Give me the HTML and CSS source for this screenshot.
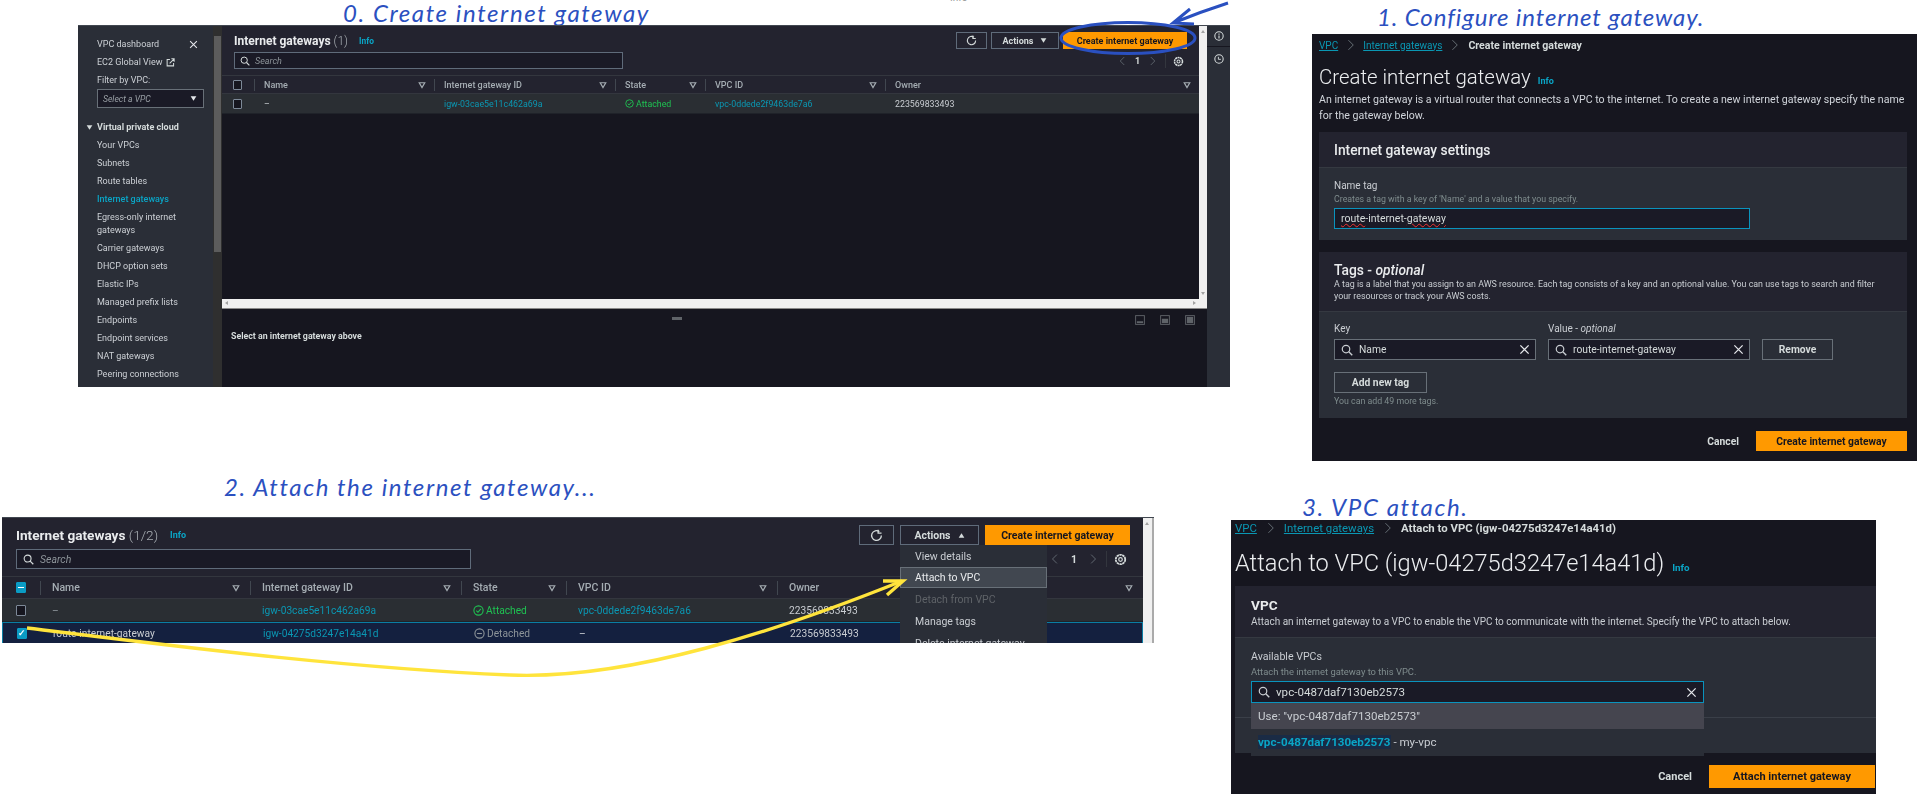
FILE: index.html
```html
<!DOCTYPE html>
<html lang="en">
<head>
    <meta charset="UTF-8" />
    <title>Internet gateway walkthrough</title>
    <link rel="stylesheet" href="styles.css">
</head>
<body>
    <svg class="defs" aria-hidden="true">
        <symbol id="i-search" viewBox="0 0 16 16"><circle cx="6.7" cy="6.7" r="5" fill="none" stroke="currentColor" stroke-width="1.6"/><path d="M10.4 10.4L15 15" stroke="currentColor" stroke-width="1.8" fill="none"/></symbol>
        <symbol id="i-close" viewBox="0 0 16 16"><path d="M2 2L14 14M14 2L2 14" stroke="currentColor" stroke-width="1.9" fill="none"/></symbol>
        <symbol id="i-filter" viewBox="0 0 16 16"><path d="M2.5 3.5H13.5L8 13Z" fill="none" stroke="currentColor" stroke-width="2.4"/></symbol>
        <symbol id="i-down" viewBox="0 0 16 16"><path d="M1.5 3H14.5L8 13Z" fill="currentColor"/></symbol>
        <symbol id="i-up" viewBox="0 0 16 16"><path d="M1.5 13H14.5L8 3Z" fill="currentColor"/></symbol>
        <symbol id="i-refresh" viewBox="0 0 16 16"><path d="M11.5 3.2A6 6 0 1 0 14 8" fill="none" stroke="currentColor" stroke-width="1.6"/><path d="M10 .8V5H14.2" fill="none" stroke="currentColor" stroke-width="1.6"/></symbol>
        <symbol id="i-gear" viewBox="0 0 16 16"><circle cx="8" cy="8" r="5.8" fill="none" stroke="currentColor" stroke-width="2.2" stroke-dasharray="3 .6"/><circle cx="8" cy="8" r="2.2" fill="none" stroke="currentColor" stroke-width="1.5"/></symbol>
        <symbol id="i-left" viewBox="0 0 16 16"><path d="M11 1L4 8L11 15" fill="none" stroke="currentColor" stroke-width="1.4"/></symbol>
        <symbol id="i-right" viewBox="0 0 16 16"><path d="M5 1L12 8L5 15" fill="none" stroke="currentColor" stroke-width="1.4"/></symbol>
        <symbol id="i-ok" viewBox="0 0 16 16"><circle cx="8" cy="8" r="6.7" fill="none" stroke="currentColor" stroke-width="1.6"/><path d="M4.8 8.2L7.2 10.6L11.4 5.6" fill="none" stroke="currentColor" stroke-width="1.6"/></symbol>
        <symbol id="i-minus" viewBox="0 0 16 16"><circle cx="8" cy="8" r="6.7" fill="none" stroke="currentColor" stroke-width="1.6"/><path d="M4.5 8H11.5" stroke="currentColor" stroke-width="1.6"/></symbol>
        <symbol id="i-ext" viewBox="0 0 16 16"><path d="M7 2.5H2V14H13.5V9" fill="none" stroke="currentColor" stroke-width="1.8"/><path d="M6.5 9.5L14 2M9.5 1.5H14.5V6.5" fill="none" stroke="currentColor" stroke-width="1.8"/></symbol>
        <symbol id="i-info" viewBox="0 0 16 16"><circle cx="8" cy="8" r="6.7" fill="none" stroke="currentColor" stroke-width="1.7"/><path d="M8 7V12M8 4V5.8" stroke="currentColor" stroke-width="1.8"/></symbol>
        <symbol id="i-clock" viewBox="0 0 16 16"><circle cx="8" cy="8" r="6.7" fill="none" stroke="currentColor" stroke-width="1.7"/><path d="M7 4.5V8.5H11" fill="none" stroke="currentColor" stroke-width="1.5"/></symbol>
        <symbol id="i-dock-low" viewBox="0 0 16 16"><rect x="1" y="1" width="14" height="14" fill="none" stroke="currentColor" stroke-width="1.5"/><rect x="3" y="10" width="10" height="3" fill="currentColor"/></symbol>
        <symbol id="i-dock-mid" viewBox="0 0 16 16"><rect x="1" y="1" width="14" height="14" fill="none" stroke="currentColor" stroke-width="1.5"/><rect x="3" y="6" width="10" height="7" fill="currentColor"/></symbol>
        <symbol id="i-dock-full" viewBox="0 0 16 16"><rect x="1" y="1" width="14" height="14" fill="none" stroke="currentColor" stroke-width="1.5"/><rect x="3" y="3" width="10" height="10" fill="currentColor"/></symbol>
    </svg>

    <p class="stray">Info</p>

    <p class="note note-0">0. Create internet gateway</p>
    <p class="note note-1">1. Configure internet gateway.</p>
    <p class="note note-2">2. Attach the internet gateway...</p>
    <p class="note note-3">3. VPC attach.</p>

    <!-- step 0: list page with nav -->
    <section class="shot shot-a">
        <nav class="sidenav">
            <div class="nav-links">
                <div class="nav-top"><a>VPC dashboard</a><svg class="nav-x"><use href="#i-close"/></svg></div>
                <a>EC2 Global View <svg class="ico-ext"><use href="#i-ext"/></svg></a>
                <a>Filter by VPC:</a>
                <div class="vpc-select"><i>Select a VPC</i><svg class="caret"><use href="#i-down"/></svg></div>
                <div class="nav-group"><svg class="group-caret"><use href="#i-down"/></svg>Virtual private cloud</div>
                <a>Your VPCs</a>
                <a>Subnets</a>
                <a>Route tables</a>
                <a class="on">Internet gateways</a>
                <a class="wrap">Egress-only internet gateways</a>
                <a>Carrier gateways</a>
                <a>DHCP option sets</a>
                <a>Elastic IPs</a>
                <a>Managed prefix lists</a>
                <a>Endpoints</a>
                <a>Endpoint services</a>
                <a>NAT gateways</a>
                <a>Peering connections</a>
            </div>
            <div class="nav-scroll"><span class="nav-thumb"></span></div>
        </nav>
        <div class="main">
            <div class="upper">
                <div class="upper-inner">
                    <div class="view">
                        <header class="head">
                            <div class="head-left">
                                <h2>Internet gateways <span>(1)</span><b class="info">Info</b></h2>
                                <div class="search"><svg><use href="#i-search"/></svg><i>Search</i></div>
                            </div>
                            <div class="head-right">
                                <div class="actions">
                                    <button class="btn btn-icon"><svg><use href="#i-refresh"/></svg></button>
                                    <button class="btn btn-actions">Actions <svg><use href="#i-down"/></svg></button>
                                    <button class="btn btn-primary">Create internet gateway</button>
                                </div>
                                <div class="pager">
                                    <svg class="pg"><use href="#i-left"/></svg><b>1</b><svg class="pg"><use href="#i-right"/></svg><span class="pg-sep"></span><svg class="gear"><use href="#i-gear"/></svg>
                                </div>
                            </div>
                        </header>
                        <div class="tbl">
                            <div class="tr th">
                                <div class="cell-check"><span class="check"></span></div>
                                <div class="col">Name<svg><use href="#i-filter"/></svg></div>
                                <div class="col">Internet gateway ID<svg><use href="#i-filter"/></svg></div>
                                <div class="col">State<svg><use href="#i-filter"/></svg></div>
                                <div class="col">VPC ID<svg><use href="#i-filter"/></svg></div>
                                <div class="col">Owner<svg><use href="#i-filter"/></svg></div>
                            </div>
                            <div class="tr row">
                                <div class="cell-check"><span class="check"></span></div>
                                <div class="td">–</div>
                                <div class="td link">igw-03cae5e11c462a69a</div>
                                <div class="td good"><svg><use href="#i-ok"/></svg>Attached</div>
                                <div class="td link">vpc-0ddede2f9463de7a6</div>
                                <div class="td">223569833493</div>
                            </div>
                        </div>
                    </div>
                    <div class="vscroll"></div>
                </div>
                <div class="hscroll"></div>
            </div>
            <div class="lower">
                <span class="grip"></span>
                <p>Select an internet gateway above</p>
                <div class="dock">
                    <svg><use href="#i-dock-low"/></svg>
                    <svg><use href="#i-dock-mid"/></svg>
                    <svg><use href="#i-dock-full"/></svg>
                </div>
            </div>
        </div>
        <aside class="rail">
            <svg><use href="#i-info"/></svg>
            <span></span>
            <svg><use href="#i-clock"/></svg>
        </aside>
    </section>

    <!-- step 1: create form -->
    <section class="shot shot-b">
        <div class="crumbs"><a>VPC</a><svg><use href="#i-right"/></svg><a>Internet gateways</a><svg><use href="#i-right"/></svg><b>Create internet gateway</b></div>
        <h1>Create internet gateway<b class="info">Info</b></h1>
        <p class="lede">An internet gateway is a virtual router that connects a VPC to the internet. To create a new internet gateway specify the name for the gateway below.</p>
        <div class="card card-settings">
            <div class="card-head"><h3>Internet gateway settings</h3></div>
            <div class="card-body">
                <label>Name tag</label>
                <small>Creates a tag with a key of 'Name' and a value that you specify.</small>
                <div class="input input-focus"><u>route</u>-internet-<u>gateway</u></div>
            </div>
        </div>
        <div class="card card-tags">
            <div class="card-head">
                <h3>Tags - <i>optional</i></h3>
                <p>A tag is a label that you assign to an AWS resource. Each tag consists of a key and an optional value. You can use tags to search and filter your resources or track your AWS costs.</p>
            </div>
            <div class="card-body">
                <div class="tag-grid">
                    <label>Key</label>
                    <label>Value - <i>optional</i></label>
                    <span></span>
                    <div class="input input-search"><svg><use href="#i-search"/></svg><span>Name</span><svg class="x"><use href="#i-close"/></svg></div>
                    <div class="input input-search"><svg><use href="#i-search"/></svg><span>route-internet-gateway</span><svg class="x"><use href="#i-close"/></svg></div>
                    <button class="btn btn-form">Remove</button>
                </div>
                <button class="btn btn-form btn-add">Add new tag</button>
                <small>You can add 49 more tags.</small>
            </div>
        </div>
        <div class="foot"><b>Cancel</b><button class="btn btn-primary">Create internet gateway</button></div>
    </section>

    <!-- step 2: list page, actions menu open -->
    <section class="shot shot-c">
        <div class="view">
            <header class="head">
                <div class="head-left">
                    <h2>Internet gateways <span>(1/2)</span><b class="info">Info</b></h2>
                    <div class="search"><svg><use href="#i-search"/></svg><i>Search</i></div>
                </div>
                <div class="head-right">
                    <div class="actions">
                        <button class="btn btn-icon"><svg><use href="#i-refresh"/></svg></button>
                        <button class="btn btn-actions">Actions <svg><use href="#i-up"/></svg></button>
                        <button class="btn btn-primary">Create internet gateway</button>
                    </div>
                    <div class="pager">
                        <svg class="pg"><use href="#i-left"/></svg><b>1</b><svg class="pg"><use href="#i-right"/></svg><span class="pg-sep"></span><svg class="gear"><use href="#i-gear"/></svg>
                    </div>
                </div>
            </header>
            <div class="tbl">
                <div class="tr th">
                    <div class="cell-check"><span class="check check-some"></span></div>
                    <div class="col">Name<svg><use href="#i-filter"/></svg></div>
                    <div class="col">Internet gateway ID<svg><use href="#i-filter"/></svg></div>
                    <div class="col">State<svg><use href="#i-filter"/></svg></div>
                    <div class="col">VPC ID<svg><use href="#i-filter"/></svg></div>
                    <div class="col">Owner<svg><use href="#i-filter"/></svg></div>
                </div>
                <div class="tr row">
                    <div class="cell-check"><span class="check"></span></div>
                    <div class="td muted">–</div>
                    <div class="td link">igw-03cae5e11c462a69a</div>
                    <div class="td good"><svg><use href="#i-ok"/></svg>Attached</div>
                    <div class="td link">vpc-0ddede2f9463de7a6</div>
                    <div class="td">223569833493</div>
                </div>
                <div class="tr row row-on">
                    <div class="cell-check"><span class="check check-on">✓</span></div>
                    <div class="td">route-internet-gateway</div>
                    <div class="td link">igw-04275d3247e14a41d</div>
                    <div class="td muted"><svg><use href="#i-minus"/></svg>Detached</div>
                    <div class="td">–</div>
                    <div class="td">223569833493</div>
                </div>
            </div>
            <ul class="menu">
                <li>View details</li>
                <li class="hover">Attach to VPC</li>
                <li class="off">Detach from VPC</li>
                <li>Manage tags</li>
                <li>Delete internet gateway</li>
            </ul>
        </div>
        <div class="vscroll"></div>
    </section>

    <!-- step 3: attach form -->
    <section class="shot shot-d">
        <div class="crumbs"><a>VPC</a><svg><use href="#i-right"/></svg><a>Internet gateways</a><svg><use href="#i-right"/></svg><b>Attach to VPC (igw-04275d3247e14a41d)</b></div>
        <h1>Attach to VPC (igw-04275d3247e14a41d)<b class="info">Info</b></h1>
        <div class="card card-attach">
            <div class="card-head">
                <h3>VPC</h3>
                <p>Attach an internet gateway to a VPC to enable the VPC to communicate with the internet. Specify the VPC to attach below.</p>
            </div>
            <div class="card-body">
                <label>Available VPCs</label>
                <small>Attach the internet gateway to this VPC.</small>
                <div class="input input-search input-focus"><svg><use href="#i-search"/></svg><span>vpc-0487daf7130eb2573</span><svg class="x"><use href="#i-close"/></svg></div>
                <div class="body-rule"></div>
                <ul class="options">
                    <li class="opt-hover">Use: "vpc-0487daf7130eb2573"</li>
                    <li><mark>vpc-0487daf7130eb2573</mark> - my-vpc</li>
                </ul>
            </div>
        </div>
        <div class="foot"><b>Cancel</b><button class="btn btn-primary">Attach internet gateway</button></div>
    </section>

    <!-- hand drawn marks on top of the screenshots -->
    <svg class="marks" viewBox="0 0 1919 812">
        <ellipse class="pen-blue" cx="1128" cy="38" rx="67" ry="15.5"/>
        <path class="pen-blue" d="M1228 3Q1200 12 1173 23M1190 9L1173 23L1194 24"/>
        <path class="pen-yellow" d="M27 628C150 643 340 668 510 675C630 680 780 630 902 581"/>
        <path class="pen-yellow" d="M883 581L903 581L887 595"/>
    </svg>
</body>
</html>
```

FILE: styles.css
```css
html, body { margin: 0; padding: 0; }
body { position: relative; width: 1919px; height: 812px; overflow: hidden; background: #fff; font-family: Roboto, "Noto Sans", sans-serif; color: #d1d5db; }
h1, h2, h3, p, ul { margin: 0; padding: 0; }
ul { list-style: none; }
.defs { position: absolute; width: 0; height: 0; }
svg { display: block; flex: none; }

/* handwriting labels */
.note { position: absolute; font-family: Lato, sans-serif; font-style: italic; font-weight: 400; color: #2b50c0; white-space: nowrap; font-size: 24px; line-height: 26px; }
.note-0 { left: 343px; top: 0; letter-spacing: 1.6px; }
.note-1 { left: 1377px; top: 4px; letter-spacing: .9px; }
.note-2 { left: 224px; top: 474px; letter-spacing: 1.6px; }
.note-3 { left: 1302px; top: 494px; letter-spacing: 1.6px; }
.stray { position: absolute; left: 950px; top: -8px; font-size: 10px; line-height: 12px; color: #999; }

.marks { position: absolute; left: 0; top: 0; width: 1919px; height: 812px; pointer-events: none; }
.pen-blue { fill: none; stroke: #2a50c0; stroke-width: 3; }
.pen-yellow { fill: none; stroke: #ffe43c; stroke-width: 3.4; }

/* the four pasted screenshots */
.shot { position: absolute; overflow: hidden; background: #16161f; filter: blur(.4px); }
.shot-a { left: 78px; top: 25px; width: 1152px; height: 362px; display: flex; font-size: 9px; border-top: 1px solid #414750; box-sizing: border-box; }
.shot-b { left: 1312px; top: 34px; width: 605px; height: 427px; padding: 0 10px 0 7px; box-sizing: border-box; font-size: 10.5px; }
.shot-c { left: 2px; top: 517px; width: 1152px; height: 126px; display: flex; font-size: 10.5px; border-top: 1px solid #414750; box-sizing: border-box; }
.shot-d { left: 1231px; top: 520px; width: 645px; height: 274px; padding: 0 0 0 4px; box-sizing: border-box; font-size: 11.5px; }

/* side navigation */
.sidenav { width: 144px; flex: none; display: flex; background: #2a2e37; }
.nav-links { width: 135px; flex: none; padding: 9px 0 0 19px; box-sizing: border-box; }
.nav-links a { display: flex; align-items: center; gap: 3px; height: 18px; line-height: 18px; color: #cdd1d6; white-space: nowrap; }
.nav-links a.on { color: #0aa5c6; font-weight: 500; }
.nav-links a.wrap { display: block; height: 31px; padding: 2.5px 0 0; box-sizing: border-box; line-height: 13.3px; white-space: normal; width: 85px; }
.nav-top { display: flex; justify-content: space-between; align-items: center; padding-right: 15px; }
.nav-x { width: 9px; height: 9px; color: #e5e7eb; }
.ico-ext { width: 9px; height: 9px; color: #d5dbdb; }
.vpc-select { display: flex; justify-content: space-between; align-items: center; width: 107px; height: 19px; margin: 0 0 10px; padding: 0 6px 0 5px; box-sizing: border-box; background: #1a1a26; border: 1px solid #687078; font-size: 8.6px; color: #9aa0a6; }
.caret { width: 7px; height: 7px; color: #e5e7eb; }
.nav-group { display: flex; align-items: center; margin-left: -11px; gap: 4px; height: 18px; font-weight: 700; color: #d5dbdb; }
.group-caret { width: 7px; height: 7px; color: #d5dbdb; }
.nav-scroll { width: 9px; background: #2f2f2f; padding-top: 10px; box-sizing: border-box; }
.nav-thumb { display: block; width: 7px; height: 216px; margin: 0 auto; background: #5c5c5c; }

/* list view */
.main { flex: 1; min-width: 0; display: flex; flex-direction: column; }
.upper { height: 283px; flex: none; display: flex; flex-direction: column; }
.upper-inner { flex: 1; min-height: 0; display: flex; }
.view { position: relative; flex: 1; min-width: 0; background: #16161f; }
.vscroll { position: relative; width: 8px; flex: none; background: #f0f0f0; }
.vscroll::before { content: ""; position: absolute; left: 2px; top: 4px; border: 2px solid transparent; border-top: 0; border-bottom: 3px solid #a3a3a3; }
.shot-a .vscroll::after { content: ""; position: absolute; left: 2px; bottom: 4px; border: 2px solid transparent; border-bottom: 0; border-top: 3px solid #a3a3a3; }
.shot-c .vscroll { width: 11px; border-right: 2px solid #aaa; box-sizing: border-box; }
.hscroll { position: relative; height: 9px; flex: none; background: #f0f0f0; border-bottom: 1px solid #8a8a8a; }
.hscroll::before { content: ""; position: absolute; left: 3px; top: 2px; border: 2px solid transparent; border-left: 0; border-right: 3px solid #a3a3a3; }
.hscroll::after { content: ""; position: absolute; right: 11px; top: 2px; border: 2px solid transparent; border-right: 0; border-left: 3px solid #a3a3a3; }
.lower { position: relative; flex: 1; background: #16161f; }
.lower p { position: absolute; left: 9px; top: 21px; font-weight: 700; font-size: 8.8px; line-height: 12px; color: #d5dbdb; }
.grip { position: absolute; left: 450px; top: 8px; width: 10px; height: 3px; background: #5f6368; }
.dock { position: absolute; right: 12px; top: 6px; display: flex; gap: 15px; color: #5f6368; }
.dock svg { width: 10px; height: 10px; }
.rail { width: 23px; flex: none; background: #2a2e37; color: #d5dbdb; padding-top: 5px; }
.rail svg { width: 10px; height: 10px; margin: 0 auto; }
.rail span { display: block; height: 1px; margin: 5px 0 7px; background: #16161f; }

.head { display: flex; justify-content: space-between; background: #23232f; box-sizing: border-box; border-bottom: 1px solid #33363e; }
.shot-a .head { height: 50px; padding: 6px 12px 0; }
.shot-c .head { height: 59px; padding: 7px 13px 0 14px; }
.head-left { display: flex; flex-direction: column; }
.shot-a .head-left { width: 389px; gap: 3px; }
.shot-c .head-left { width: 455px; gap: 4px; }
h2 { display: flex; align-items: center; font-weight: 700; color: #e9ebed; white-space: pre; }
.shot-a h2 { height: 17px; font-size: 12px; }
.shot-c h2 { height: 20px; font-size: 13.6px; }
h2 span { font-weight: 300; color: #aab0b5; }
.info { color: #0aa5c6; font-weight: 700; font-size: 8.4px; }
.shot-a .info { margin-left: 11px; }
.shot-c .info { margin-left: 12px; font-size: 9px; }
.search { display: flex; align-items: center; background: #1a1a26; border: 1px solid #5f6b7a; box-sizing: border-box; color: #d5dbdb; }
.shot-a .search { height: 17px; padding: 0 5px; gap: 5px; }
.shot-c .search { height: 20px; padding: 0 6px; gap: 6px; }
.search svg { width: 10px; height: 10px; }
.shot-c .search svg { width: 11px; height: 11px; }
.search i { color: #8d9499; }
.head-right { display: flex; flex-direction: column; align-items: flex-end; gap: 4px; }
.actions { display: flex; }
.shot-a .actions { gap: 4px; height: 17px; }
.shot-c .actions { gap: 6px; height: 20px; }
.btn { display: flex; align-items: center; justify-content: center; gap: 7px; padding: 0; box-sizing: border-box; font: 700 1em Roboto, sans-serif; color: #d5dbdb; background: #23232f; border: 1px solid #5f6b7a; white-space: nowrap; }
.btn-primary { background: #ff9900; border-color: #ff9900; color: #16161f; }
.shot-a .btn-icon { width: 31px; }
.shot-a .btn-actions { width: 68px; }
.shot-a .btn-primary { width: 124px; }
.shot-c .btn-icon { width: 35px; }
.shot-c .btn-actions { width: 79px; }
.shot-c .btn-primary { width: 145px; }
.btn-icon svg { width: 11px; height: 11px; }
.shot-c .btn-icon svg { width: 13px; height: 13px; }
.btn-actions svg { width: 7px; height: 7px; }
.pager { display: flex; align-items: center; padding-right: 3px; color: #d5dbdb; }
.shot-a .pager { height: 16px; }
.shot-c .pager { height: 20px; }
.pg { width: 9px; height: 12px; color: #687078; }
.pager b { text-align: center; width: 21px; }
.pg-sep { width: 1px; height: 14px; margin: 0 7px 0 8px; background: #33363e; }
.gear { width: 11px; height: 11px; }
.shot-c .pg { height: 14px; width: 10px; }
.shot-c .pager b { width: 28px; }
.shot-c .pg-sep { height: 16px; }
.shot-c .gear { width: 13px; height: 13px; }

.tr { display: grid; align-items: center; box-sizing: border-box; }
.shot-a .tr { grid-template-columns: 32px 180px 181px 90px 180px 1fr; }
.shot-c .tr { grid-template-columns: 38px 210px 211px 105px 211px 1fr; }
.th { background: #23232f; border-bottom: 1px solid #33363e; font-weight: 500; color: #a5adb3; }
.shot-a .th { height: 18px; }
.shot-c .th { height: 22px; }
.cell-check { padding-left: 11px; }
.shot-c .cell-check { padding-left: 14px; }
.check { display: block; box-sizing: border-box; width: 9px; height: 10px; background: #16161f; border: 1px solid #7d8998; border-radius: 1px; }
.shot-c .check { width: 10px; height: 11px; }
.check-some, .check-on { background: #0a9bc4 !important; border-color: #0a9bc4 !important; color: #fff; font-size: 9px; line-height: 9px; font-weight: 700; text-align: center; }
.check-some::before { content: ""; display: block; width: 6px; height: 1.5px; margin: 3.5px auto 0; background: #fff; }
.col { display: flex; justify-content: space-between; align-items: center; height: 12px; border-left: 1px solid #414750; padding: 0 8px 0 9px; }
.shot-c .col { height: 14px; padding: 0 10px 0 11px; }
.col svg { width: 8px; height: 8px; color: #a5adb3; }
.row { background: #2a2e33; border-bottom: 1px solid #1f2229; }
.shot-a .row { height: 20px; font-size: 8.8px; }
.shot-c .row { height: 23px; font-size: 10.2px; }
.shot-c .row-on { height: 22px; background: #14203f; border: 1px solid #0a7da3; border-bottom-color: #0a7da3; margin: 0; }
.td { display: flex; align-items: center; gap: 2px; padding-left: 10px; white-space: nowrap; color: #c9cdd2; }
.shot-c .td { padding-left: 12px; }
.td svg { width: 9px; height: 9px; }
.shot-c .td svg { width: 11px; height: 11px; }
.link { color: #0a97b3; }
.good { color: #1fc252; }
.muted { color: #8d9499; }
.row-on .td:nth-child(5) { color: #c9cdd2; }

/* open actions menu */
.menu { position: absolute; left: 898px; top: 27px; width: 147px; height: 99px; overflow: hidden; background: #2a2e37; color: #c9cdd2; }
.menu li { height: 21.7px; line-height: 23px; padding-left: 15px; box-sizing: border-box; white-space: nowrap; }
.menu .hover { background: #414750; border: 1px solid #687078; padding-left: 14px; line-height: 20px; color: #e9ebed; }
.menu .off { color: #5f6368; }

/* form pages */
.crumbs { display: flex; align-items: center; white-space: nowrap; }
.crumbs a { color: #0a97b3; text-decoration: underline; }
.crumbs b { font-weight: 700; color: #d5dbdb; }
.crumbs svg { color: #687078; }
h1 { display: flex; align-items: baseline; font-weight: 300; color: #eceef0; white-space: nowrap; }
h1 .info { font-size: 9.5px; margin-left: 7px; }
.lede { color: #d1d5db; line-height: 16px; height: 32px; }
.card { background: #2a2e37; }
.card-head { background: #23232f; border-bottom: 1px solid #353941; box-sizing: border-box; padding: 0 15px; }
h3 { font-weight: 500; color: #e9ebed; }
.card-body { position: relative; padding: 0 15px; box-sizing: border-box; }
label { display: block; color: #c9cdd2; }
small { display: block; color: #7f8c8d; }
.input { display: flex; align-items: center; background: #1a1a26; border: 1px solid #687078; box-sizing: border-box; color: #d5dbdb; }
.input-focus { border: 1.5px solid #0a93bd; }
.input u { text-decoration: underline wavy #e33 1px; }
.input-search svg { width: 12px; height: 12px; color: #c9cdd2; }
.input-search span { flex: 1; }
.input-search .x { width: 11px; height: 11px; color: #e5e7eb; }
.foot { display: flex; justify-content: flex-end; align-items: center; }
.foot b { color: #d5dbdb; }

.shot-b .crumbs { height: 22px; gap: 7px; font-size: 10px; }
.shot-b .crumbs b { font-size: 10.6px; margin-left: 1px; }
.shot-b .crumbs svg { width: 11px; height: 14px; }
.shot-b h1 { height: 28px; margin-top: 7px; font-size: 20.4px; line-height: 28px; }
.shot-b h1 .info { font-size: 9px; }
.shot-b .lede { margin: 1px 0 8px; font-size: 10.6px; }
.shot-b h3 { font-size: 13.8px; }
.card-settings .card-head { height: 36px; padding-top: 10px; line-height: 16px; }
.card-settings .card-body { height: 72px; padding-top: 11px; }
.shot-b label { height: 14px; line-height: 14px; font-size: 10px; }
.shot-b small { height: 12px; line-height: 12px; font-size: 8.8px; }
.card-settings .input { width: 416px; height: 21px; margin-top: 3px; padding: 0 6px; font-size: 10.5px; }
.card-tags { margin-top: 12px; }
.card-tags .card-head { height: 60px; padding-top: 10px; }
.card-tags h3 { line-height: 16px; }
.card-tags .card-head p { width: 550px; margin-top: 1px; font-size: 8.9px; line-height: 11.5px; color: #c9cdd2; }
.card-tags .card-body { height: 106px; padding-top: 10px; }
.tag-grid { display: grid; grid-template-columns: 202px 202px 71px; column-gap: 12px; row-gap: 3px; }
.tag-grid .input { height: 21px; padding: 0 5px 0 6px; gap: 6px; font-size: 10.3px; }
.btn-form { background: transparent; height: 21px; font-size: 10.3px; border-color: #687078; }
.btn-add { width: 93px; margin-top: 12px; }
.card-tags small { margin-top: 2px; }
.shot-b .foot { margin-top: 13px; gap: 17px; font-size: 10.3px; }
.shot-b .foot .btn { width: 151px; height: 20px; }

.shot-d .crumbs { height: 16px; gap: 8px; font-size: 11.4px; }
.shot-d .crumbs svg { width: 11px; height: 14px; }
.shot-d h1 { height: 36px; margin-top: 9px; font-size: 23.6px; line-height: 36px; }
.shot-d h1 .info { font-size: 9.8px; margin-left: 8px; }
.card-attach { margin-top: 5px; }
.card-attach .card-head { height: 52px; padding-top: 10px; padding-left: 16px; }
.card-attach h3 { font-size: 13.6px; line-height: 18px; font-weight: 700; }
.card-attach .card-head p { font-size: 10px; line-height: 14px; margin-top: 1px; color: #c9cdd2; white-space: nowrap; }
.card-attach .card-body { height: 115px; padding: 12px 16px 0; }
.shot-d label { height: 14px; line-height: 14px; font-size: 10.6px; }
.shot-d small { height: 14px; line-height: 14px; margin-top: 1px; font-size: 9.4px; }
.card-attach .input { width: 453px; height: 22px; margin-top: 2px; padding: 0 6px; gap: 6px; font-size: 11.6px; }
.body-rule { height: 1px; margin: 14px -16px 0; background: #3a3f48; }
.options { position: absolute; left: 16px; top: 65px; width: 453px; background: #2a2e37; font-size: 11.6px; color: #c9cdd2; }
.options li { height: 27px; line-height: 27px; padding-left: 7px; box-sizing: border-box; }
.options .opt-hover { height: 26px; line-height: 26px; background: #45454f; }
mark { background: #1a2b45; color: #0aa5c6; font-weight: 700; }
.shot-d .foot { margin-top: 12px; gap: 17px; padding-right: 1px; font-size: 11px; }
.shot-d .foot .btn { width: 166px; height: 23px; }
```
